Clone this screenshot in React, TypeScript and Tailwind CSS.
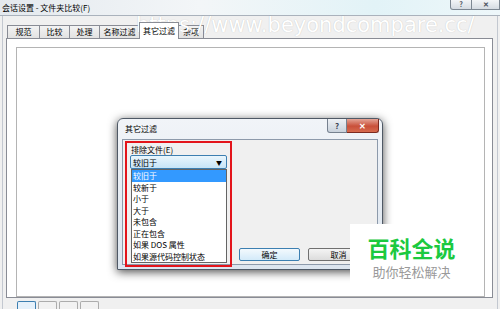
import React from "react";

const tabs = [
  { label: "规范", w: "w-[33px]" },
  { label: "比较", w: "w-[31px]" },
  { label: "处理", w: "w-[31px]" },
  { label: "名称过滤", w: "w-[41px]" },
];

const items = ["较旧于", "较新于", "小于", "大于", "未包含", "正在包含", "如果 DOS 属性", "如果源代码控制状态"];

function OtherFilterDialog() {
  return (
    <div className="absolute left-[117px] top-[118px] h-[152px] w-[266px] rounded-t-[6px] border border-[#4f5966] bg-[linear-gradient(#f1f4f8,#dce5ef)] shadow-[0_2px_10px_rgba(0,0,0,0.7)]">
      <div className="flex h-[20px] items-start justify-between">
        <span className="pl-[7px] pt-[4px]">其它过滤</span>
        <div className="mr-[3px] flex">
          <div className="flex h-[14px] w-[20px] items-center justify-center rounded-bl-[3px] border border-t-0 border-[#76818f] bg-[linear-gradient(#eef1f5,#c9d2dc)] text-[8px] font-bold text-[#3c4552]">
            ?
          </div>
          <div className="flex h-[14px] w-[32px] items-center justify-center rounded-br-[3px] border border-t-0 border-l-0 border-[#7c2a20] bg-[linear-gradient(#e4a597,#c9503a_55%,#d66a4e)] text-[8px] font-bold text-white">
            ✕
          </div>
        </div>
      </div>
      <div className="mx-[4px] flex h-[126px] border border-[#8d9aab] bg-[#f0f0f0] pl-[2px] pt-[1px]">
        <div className="h-[126px] w-[107px] border-2 border-[#e3141b] pl-[4px] pt-[1px]">
          <div className="h-[11px]">排除文件(E)</div>
          <div className="-ml-px flex h-[14px] w-[97px] items-center justify-between rounded-[2px] border border-[#3c7fb1] bg-[linear-gradient(#eaf6fd,#c6e4f7)] pl-[2px] pr-[4px]">
            <span>较旧于</span>
            <span className="text-[6px]">▼</span>
          </div>
          <div className="h-[94px] w-[96px] border border-[#646464] bg-white">
            {items.map((t, i) => (
              <div
                key={t}
                className={
                  i === 0
                    ? "h-[11.5px] bg-[#3399ff] px-px leading-[11.5px] text-white"
                    : "h-[11.5px] px-px leading-[11.5px]"
                }
              >
                {t}
              </div>
            ))}
          </div>
        </div>
        <div className="flex flex-1 items-end justify-end gap-[8px] pb-[3px] pr-[8px]">
          <div className="flex h-[13px] w-[61px] items-center justify-center rounded-[2px] border border-[#3c7fb1] bg-[linear-gradient(#f3f9fd,#d3eaf9)]">
            确定
          </div>
          <div className="flex h-[13px] w-[61px] items-center justify-center rounded-[2px] border border-[#707070] bg-[linear-gradient(#f4f4f4,#dcdcdc)]">
            取消
          </div>
        </div>
      </div>
    </div>
  );
}

export default function App() {
  return (
    <div className="relative h-[309px] w-[500px] overflow-hidden bg-[#f0f0f0] font-['Noto_Sans_CJK_SC',sans-serif] text-[8px] leading-[11px] text-black">
      {/* title bar */}
      <div className="flex h-[16px] items-start justify-between border-b border-[#aab2bc] bg-[linear-gradient(90deg,#e4e9ee_0%,#f3f6f8_40%,#e2f3f7_75%,#eef7fa_100%)]">
        <span className="pl-[2px] pt-[2px]">会话设置 - 文件夹比较(F)</span>
        <div className="flex">
          <div className="flex h-[10px] w-[22px] items-end justify-center rounded-bl-[3px] border border-t-0 border-[#7d8792] bg-[linear-gradient(#f3f5f7,#d5dbe2)] text-[7px] font-bold leading-[9px] text-[#4a525d]">
            ?
          </div>
          <div className="flex h-[10px] w-[28px] items-end justify-center border border-t-0 border-l-0 border-[#7d8792] bg-[linear-gradient(#f3f5f7,#d5dbe2)] text-[7px] font-bold leading-[9px] text-[#4a525d]">
            ✕
          </div>
        </div>
      </div>

      {/* window body */}
      <div className="mx-[2px] flex h-[293px] flex-col border-x border-[#c3c8d0] pl-[3px] pr-[4px]">
        <div className="flex h-[22px] items-end pl-px">
          {tabs.map((t) => (
            <div
              key={t.label}
              className={`${t.w} -mr-px flex h-[13px] items-center justify-center border border-b-0 border-[#898c95] bg-[linear-gradient(#f3f3f3,#e2e2e2)]`}
            >
              {t.label}
            </div>
          ))}
          <div className="relative z-10 -mb-px -mr-px flex h-[17px] w-[40px] items-center justify-center border border-b-0 border-[#898c95] bg-white">
            其它过滤
          </div>
          <div className="flex h-[13px] w-[26px] items-center justify-center border border-b-0 border-[#898c95] bg-[linear-gradient(#f3f3f3,#e2e2e2)]">
            杂项
          </div>
        </div>
        <div className="h-[264px] border border-[#898c95] bg-white pl-[9px] pr-[7px] pt-[8px]">
          <div className="h-[250px] border border-[#b4b4b4]" />
        </div>
        <div className="mt-[3px] flex gap-[2px] pl-[11px]">
          <div className="h-[8px] w-[19px] rounded-t-[2px] border border-b-0 border-[#3c7fb1] bg-[#e5f1fb]" />
          <div className="h-[8px] w-[19px] rounded-t-[2px] border border-b-0 border-[#acacac] bg-[#f2f2f2]" />
          <div className="h-[8px] w-[19px] rounded-t-[2px] border border-b-0 border-[#acacac] bg-[#f2f2f2]" />
          <div className="h-[8px] w-[19px] rounded-t-[2px] border border-b-0 border-[#acacac] bg-[#f2f2f2]" />
        </div>
      </div>

      <OtherFilterDialog />

      {/* watermark url */}
      <div className="absolute left-[136px] top-[15px] font-['DejaVu_Sans',sans-serif] text-[21px] leading-none text-white [text-shadow:0_0_1px_rgba(0,0,0,0.22)]">
        https://www.beyondcompare.cc/
      </div>

      {/* watermark logo */}
      <div className="absolute left-[350px] top-[224px] flex h-[64px] w-[132px] flex-col items-center bg-white pr-[9px] pt-[12px]">
        <span className="text-[22px] font-bold leading-[22px] text-[#1bc93f]">百科全说</span>
        <span className="mt-[7px] text-[13px] leading-[13px] text-[#9a9a9a]">助你轻松解决</span>
      </div>
    </div>
  );
}
